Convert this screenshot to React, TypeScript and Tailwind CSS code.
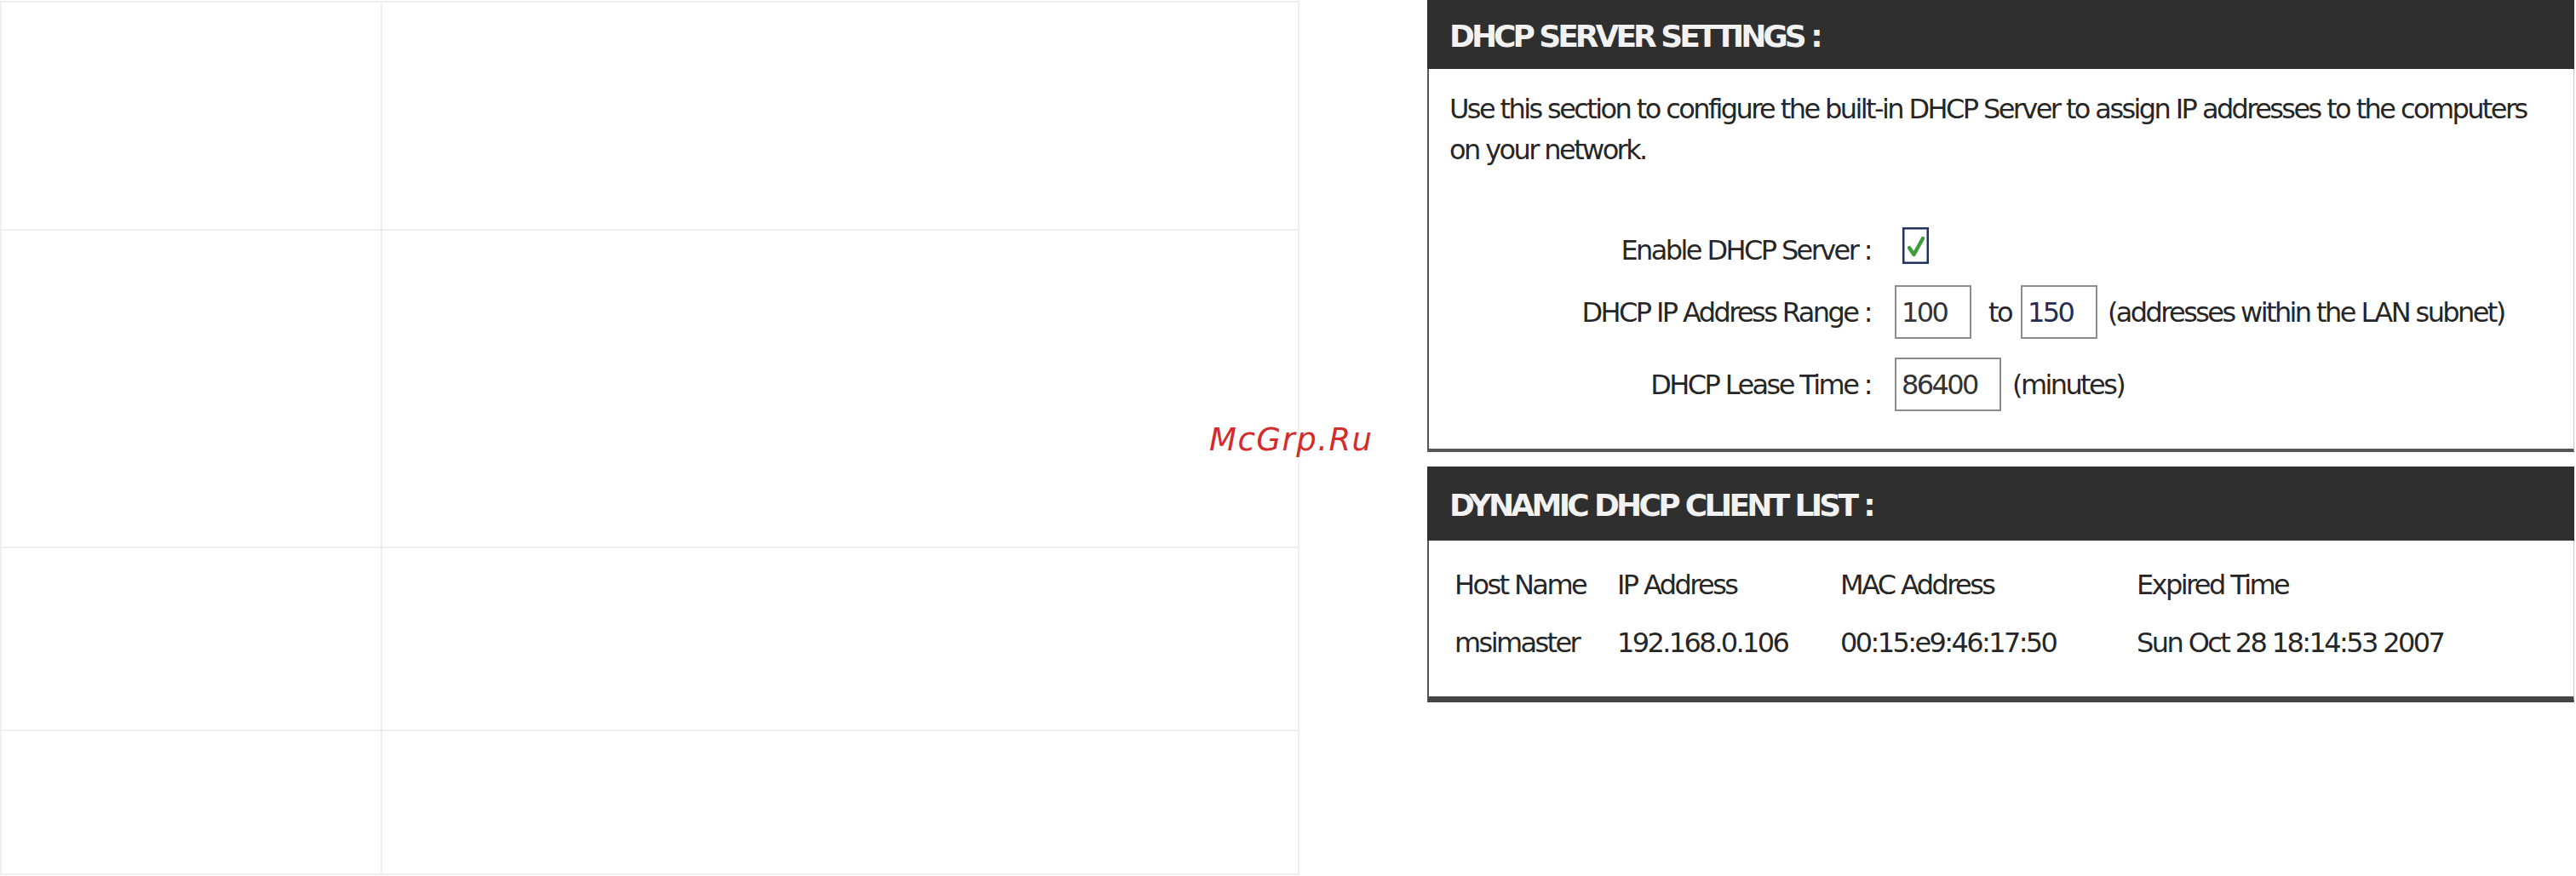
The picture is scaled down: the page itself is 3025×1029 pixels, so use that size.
import React from "react";

const clients = [
  {
    host: "msimaster",
    ip: "192.168.0.106",
    mac: "00:15:e9:46:17:50",
    expires: "Sun Oct 28 18:14:53 2007",
  },
];

function CheckBox() {
  return (
    <svg width="31" height="43" viewBox="0 0 31 43" className="ml-[37px] -mt-[12px]">
      <rect x="1.25" y="1.25" width="28.5" height="40.5" fill="#fff" stroke="#24335e" strokeWidth="2.5" />
      <path d="M8 24 L13.5 32 L24 13" fill="none" stroke="#3d9e3a" strokeWidth="4.5" strokeLinecap="round" strokeLinejoin="round" />
    </svg>
  );
}

function Field({ value, width, bold }: { value: string; width: string; bold?: boolean }) {
  return (
    <input
      readOnly
      value={value}
      className={`${width} h-[63px] border-2 border-[#8c8c8c] bg-white px-[6px] outline-none ${
        bold ? "text-[#262b52]" : "text-[#333]"
      }`}
    />
  );
}

export default function App() {
  const cell = "border-r-2 border-b-2 border-[#efefef]";

  return (
    <div className="relative flex h-[1029px] w-[3025px] overflow-hidden bg-white font-['DejaVu_Sans',sans-serif] text-[#262626]">
      {/* empty table on the left */}
      <div className="mt-px grid w-[1526px] grid-cols-[447px_1077px] grid-rows-[268px_373px_215px_169px] self-start border-l-2 border-t-2 border-[#efefef]">
        <div className={cell} />
        <div className={cell} />
        <div className={cell} />
        <div className={cell} />
        <div className={cell} />
        <div className={cell} />
        <div className={cell} />
        <div className={cell} />
      </div>

      <div className="ml-[150px] flex w-[1347px] flex-col text-[32px] tracking-[-2.6px]">
        {/* DHCP server settings */}
        <section className="flex flex-col">
          <div className="h-[81px] bg-[#2f2f2f] pl-[26px] pt-[25px]">
            <h2 className="text-[36px] font-bold leading-[36px] tracking-[-4px] text-[#f2f2f2]">
              DHCP SERVER SETTINGS :
            </h2>
          </div>
          <div className="h-[450px] border-b-4 border-l-2 border-r border-b-[#555] border-l-[#555] border-r-[#c8c8c8]">
            <p className="w-[1300px] pl-[24px] pt-[23px] leading-[48px]">
              Use this section to configure the built-in DHCP Server to assign IP addresses to the computers on your
              network.
            </p>

            <div className="mt-[60px] flex flex-col">
              <div className="flex h-[68px] items-center">
                <span className="w-[519px] text-right">Enable DHCP Server :</span>
                <CheckBox />
              </div>
              <div className="mt-[7px] flex h-[63px] items-center">
                <span className="w-[519px] text-right">DHCP IP Address Range :</span>
                <div className="ml-[28px] flex items-center">
                  <Field value="100" width="w-[90px]" />
                  <span className="ml-[20px] mr-[11px]">to</span>
                  <Field value="150" width="w-[90px]" bold />
                  <span className="ml-[12px]">(addresses within the LAN subnet)</span>
                </div>
              </div>
              <div className="mt-[22px] flex h-[63px] items-center">
                <span className="w-[519px] text-right">DHCP Lease Time :</span>
                <div className="ml-[28px] flex items-center">
                  <Field value="86400" width="w-[125px]" />
                  <span className="ml-[13px]">(minutes)</span>
                </div>
              </div>
            </div>
          </div>
        </section>

        {/* client list */}
        <section className="mt-[17px] flex flex-col">
          <div className="h-[87px] bg-[#2f2f2f] pl-[26px] pt-[28px]">
            <h2 className="text-[36px] font-bold leading-[36px] tracking-[-3.7px] text-[#f2f2f2]">
              DYNAMIC DHCP CLIENT LIST :
            </h2>
          </div>
          <div className="h-[190px] border-b-[7px] border-l-2 border-r border-b-[#444] border-l-[#555] border-r-[#c8c8c8] pl-[30px] pt-[18px]">
            <div className="grid grid-cols-[191px_262px_348px_1fr] leading-[68px]">
              <span>Host Name</span>
              <span>IP Address</span>
              <span>MAC Address</span>
              <span>Expired Time</span>
              {clients.map((c) => (
                <React.Fragment key={c.mac}>
                  <span>{c.host}</span>
                  <span>{c.ip}</span>
                  <span>{c.mac}</span>
                  <span>{c.expires}</span>
                </React.Fragment>
              ))}
            </div>
          </div>
        </section>
      </div>

      <div className="absolute left-[1420px] top-[498px] text-[37px] italic leading-[37px] tracking-[1.5px] text-[#d42b2b]">
        McGrp.Ru
      </div>
    </div>
  );
}
